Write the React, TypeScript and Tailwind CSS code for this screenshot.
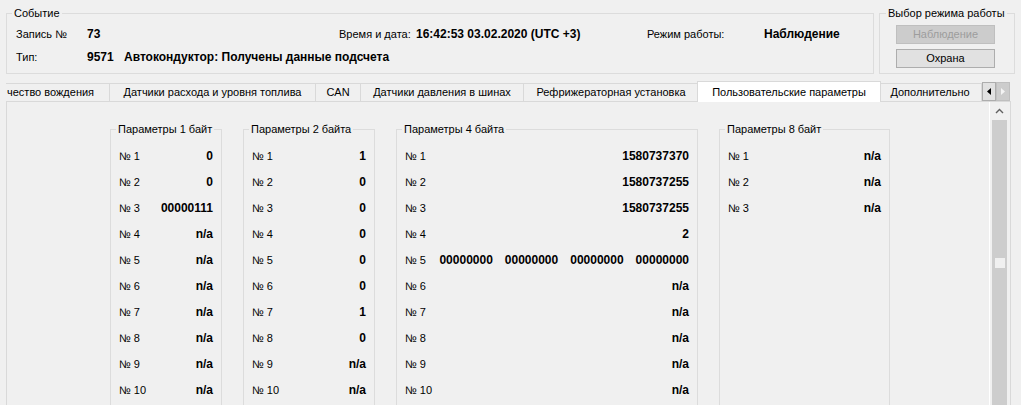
import React from 'react';

const oneByte = ['0', '0', '00000111', 'n/a', 'n/a', 'n/a', 'n/a', 'n/a', 'n/a', 'n/a'];
const twoBytes = ['1', '0', '0', '0', '0', '0', '1', '0', 'n/a', 'n/a'];
const fourBytes = ['1580737370', '1580737255', '1580737255', '2', 'bits', 'n/a', 'n/a', 'n/a', 'n/a', 'n/a'];
const eightBytes = ['n/a', 'n/a', 'n/a'];

const tabs = [
  { label: 'чество вождения', cls: 'w-[104px] justify-start pl-[1px]' },
  { label: 'Датчики расхода и уровня топлива', cls: 'w-[206px] justify-center' },
  { label: 'CAN', cls: 'w-[45px] justify-center' },
  { label: 'Датчики давления в шинах', cls: 'w-[163px] justify-center' },
  { label: 'Рефрижераторная установка', cls: 'w-[175px] justify-center' },
];

interface GroupProps {
  title: string;
  width: string;
  values: string[];
}

const ParamGroup: React.FC<GroupProps> = ({ title, width, values }) => (
  <fieldset className={`${width} h-[300px] shrink-0 m-0 border border-[#dcdcdc] pl-[5px] pr-0 pb-0 pt-0`}>
    <legend className="px-[2px] leading-[13px]">{title}</legend>
    <div className="pt-[7px] pl-[3px] pr-[8px]">
      {values.map((v, i) => (
        <div key={i} className="h-[26px] flex items-center justify-between">
          <span>№ {i + 1}</span>
          {v === 'bits' ? (
            <span className="flex gap-[12px] font-bold text-[12px]">
              <span>00000000</span>
              <span>00000000</span>
              <span>00000000</span>
              <span>00000000</span>
            </span>
          ) : (
            <span className="font-bold text-[12px]">{v}</span>
          )}
        </div>
      ))}
    </div>
  </fieldset>
);

export default function App() {
  return (
    <div className="w-[1021px] h-[411px] bg-white text-black text-[11px] font-['Liberation_Sans',Arial,sans-serif]">
      <div className="h-[405px] bg-[#f0f0f0] flex flex-col overflow-hidden">
        {/* Event info + mode selection */}
        <div className="flex pt-[7px] pl-[6px]">
          <fieldset className="w-[868px] h-[67px] m-0 border border-[#dcdcdc] pl-[5px] pr-0 pt-0 pb-0">
            <legend className="px-[2px] leading-[13px]">Событие</legend>
            <div className="pl-[4px] pt-[4px]">
              <div className="h-[20px] flex items-center">
                <span className="w-[71px]">Запись №</span>
                <span className="w-[252px] font-bold text-[12px]">73</span>
                <span className="w-[77px]">Время и дата:</span>
                <span className="w-[231px] font-bold text-[12px]">16:42:53 03.02.2020 (UTC +3)</span>
                <span className="w-[117px]">Режим работы:</span>
                <span className="font-bold text-[12px]">Наблюдение</span>
              </div>
              <div className="h-[20px] mt-[3px] flex items-center">
                <span className="w-[71px]">Тип:</span>
                <span className="w-[37px] font-bold text-[12px]">9571</span>
                <span className="font-bold text-[12px]">Автокондуктор: Получены данные подсчета</span>
              </div>
            </div>
          </fieldset>
          <fieldset className="ml-[5px] w-[136px] h-[67px] m-0 border border-[#dcdcdc] pl-[6px] pr-0 pt-0 pb-0">
            <legend className="px-[2px] leading-[13px]">Выбор режима работы</legend>
            <div className="pl-[10px] pt-[5px] flex flex-col gap-[5px]">
              <div className="w-[99px] h-[19px] border border-[#bfbfbf] bg-[#cccccc] text-[#9d9d9d] flex items-center justify-center">
                Наблюдение
              </div>
              <div className="w-[99px] h-[19px] border border-[#adadad] bg-[#e1e1e1] flex items-center justify-center">
                Охрана
              </div>
            </div>
          </fieldset>
        </div>

        {/* Tab strip */}
        <div className="mt-[7px] ml-[6px] h-[20px] flex items-end">
          {tabs.map((t) => (
            <div
              key={t.label}
              className={`${t.cls} h-[18px] shrink-0 flex items-center overflow-hidden whitespace-nowrap border-t border-r border-[#d9d9d9]`}
            >
              {t.label}
            </div>
          ))}
          <div className="relative z-10 -ml-[2px] -mr-[2px] -mb-[1px] w-[184px] h-[21px] shrink-0 flex items-center justify-center whitespace-nowrap bg-white border-t border-l border-r border-[#d9d9d9]">
            Пользовательские параметры
          </div>
          <div className="w-[103px] h-[18px] shrink-0 flex items-center justify-center whitespace-nowrap border-t border-r border-[#d9d9d9]">
            Дополнительно
          </div>
          <div className="flex self-end mb-[0px] h-[19px]">
            <div className="w-[14px] h-[19px] border border-[#adadad] bg-[#e1e1e1] flex items-center justify-center">
              <svg width="4" height="7" viewBox="0 0 4 7">
                <polygon points="4,0 0,3.5 4,7" fill="#000" />
              </svg>
            </div>
            <div className="w-[14px] h-[19px] border border-[#bfbfbf] bg-[#cccccc] flex items-center justify-center">
              <svg width="4" height="7" viewBox="0 0 4 7">
                <polygon points="0,0 4,3.5 0,7" fill="#f4f4f4" />
              </svg>
            </div>
          </div>
        </div>

        {/* Tab page */}
        <div className="ml-[6px] w-[1005px] flex-1 flex border-t border-l border-r border-[#d9d9d9] overflow-hidden">
          <div className="flex-1 flex items-start pt-[21px] pl-[103px] gap-[21px] overflow-hidden">
            <ParamGroup title="Параметры 1 байт" width="w-[112px]" values={oneByte} />
            <ParamGroup title="Параметры 2 байта" width="w-[132px]" values={twoBytes} />
            <ParamGroup title="Параметры 4 байта" width="w-[302px]" values={fourBytes} />
            <ParamGroup title="Параметры 8 байт" width="w-[171px]" values={eightBytes} />
          </div>
          <div className="w-[19px] mr-[2px] shrink-0 border-l border-white flex flex-col">
            <div className="h-[18px] flex items-center justify-center">
              <svg width="9" height="6" viewBox="0 0 9 6">
                <polyline points="1,5 4.5,1.5 8,5" fill="none" stroke="#606060" strokeWidth="1.4" />
              </svg>
            </div>
            <div className="flex-1 ml-[2px] mr-[1px] bg-[#cdcdcd] flex flex-col items-center pt-[138px]">
              <div className="w-[10px] h-[10px] bg-[#f0f0f0]" />
            </div>
          </div>
        </div>
      </div>
    </div>
  );
}
